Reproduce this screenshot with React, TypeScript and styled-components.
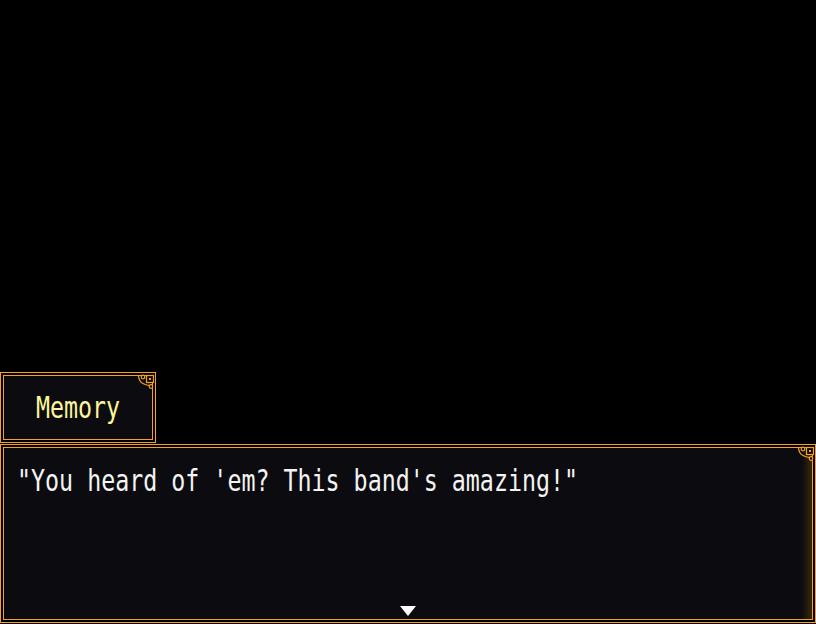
import styled, { createGlobalStyle } from 'styled-components';

const ORANGE = '#f7a21b';

const GlobalStyle = createGlobalStyle`
  html, body {
    margin: 0;
    padding: 0;
    background: #000;
  }
  body {
    font-family: "DejaVu Sans Mono", "Liberation Mono", monospace;
  }
`;

const Ornament: React.FC = () => (
  <OrnamentSvg width="22" height="22" viewBox="0 0 22 22">
    <rect x="12.5" y="3.5" width="7" height="7" fill="#0c0c10" stroke={ORANGE} strokeWidth="1.2" />
    <rect x="15" y="6" width="2" height="2" fill={ORANGE} />
    <circle cx="9" cy="5" r="1.8" fill="#0c0c10" stroke={ORANGE} strokeWidth="1.2" />
    <circle cx="17" cy="14.5" r="1.8" fill="#0c0c10" stroke={ORANGE} strokeWidth="1.2" />
    <path d="M4.5 4 Q5 9.5 9 11.5 Q12 13 15 13.5" fill="none" stroke={ORANGE} strokeWidth="1.2" />
  </OrnamentSvg>
);

const App: React.FC = () => (
  <>
    <GlobalStyle />
    <Screen>
      <Frame $width={156} $height={71}>
        <NameInner>
          <Tall>Memory</Tall>
          <Ornament />
        </NameInner>
      </Frame>
      <Frame $width={816} $height={179}>
        <MessageInner>
          <Line>
            <Tall>"You heard of 'em? This band's amazing!"</Tall>
          </Line>
          <Ornament />
          <NextArrow />
        </MessageInner>
      </Frame>
    </Screen>
  </>
);
export default App;

const Screen = styled.main`
  height: 624px;
  display: flex;
  flex-direction: column;
  justify-content: flex-end;
  align-items: flex-start;
  gap: 1px;
  padding-bottom: 1px;
  box-sizing: border-box;
  background: #000;
`;

const Frame = styled.section<{ $width: number; $height: number }>`
  width: ${(p) => p.$width}px;
  height: ${(p) => p.$height}px;
  box-sizing: border-box;
  border: 1px solid ${ORANGE};
  padding: 2px;
  background: #000;
  display: flex;
`;

const Inner = styled.div`
  position: relative;
  flex: 1;
  box-sizing: border-box;
  border: 1px solid ${ORANGE};
  background: #0c0c10;
`;

const Tall = styled.span`
  display: inline-block;
  font-size: 23.3px;
  line-height: 36px;
  white-space: pre;
  transform: scaleY(1.3);
  transform-origin: 0 26px;
`;

const NameInner = styled(Inner)`
  display: flex;
  align-items: center;
  justify-content: center;
  color: #fdf59a;
  padding-top: 4px;
`;

const MessageInner = styled(Inner)`
  padding: 17px 13px 0;
  color: #f4f4f4;
  background: linear-gradient(
    to right,
    #0c0c10 0,
    #0c0c10 calc(100% - 10px),
    #3a2808 100%
  );
`;

const Line = styled.p`
  margin: 0;
  line-height: 36px;
`;

const OrnamentSvg = styled.svg`
  position: absolute;
  top: -4px;
  right: -4px;
  display: block;
`;

const NextArrow = styled.span`
  position: absolute;
  left: 50%;
  bottom: 3px;
  transform: translateX(-50%);
  width: 0;
  height: 0;
  border-left: 8px solid transparent;
  border-right: 8px solid transparent;
  border-top: 10px solid #fff;
`;
